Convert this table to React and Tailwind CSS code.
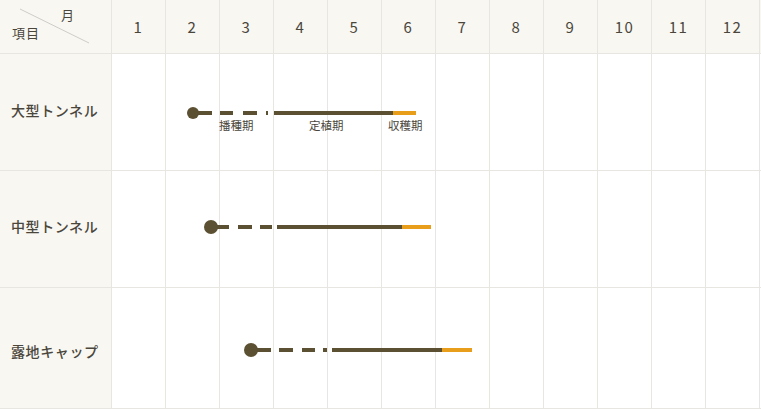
const months = [1, 2, 3, 4, 5, 6, 7, 8, 9, 10, 11, 12];

const BROWN = "#5c5032";
const ORANGE = "#e89e1a";

const rows = [
  {
    label: "大型トンネル",
    h: "h-[117px]",
    pad: "pt-[46px]",
    y: 59,
    circle: 81,
    r: 6,
    segs: [
      [81, 100],
      [108, 121],
      [131, 145],
      [154, 156],
      [162, 281],
    ],
    orange: [281, 304],
    labels: [
      ["播種期", "left-[107px]"],
      ["定植期", "left-[197px]"],
      ["収穫期", "left-[276px]"],
    ],
  },
  {
    label: "中型トンネル",
    h: "h-[117px]",
    pad: "pt-[45px]",
    y: 56,
    circle: 99,
    r: 7,
    segs: [
      [99, 117],
      [126, 140],
      [148, 160],
      [165, 290],
    ],
    orange: [290, 319],
  },
  {
    label: "露地キャップ",
    h: "h-[121px]",
    pad: "pt-[53px]",
    y: 62,
    circle: 139,
    r: 7,
    segs: [
      [139, 159],
      [167, 181],
      [190, 203],
      [211, 215],
      [220, 330],
    ],
    orange: [330, 360],
  },
];

const font = {
  fontFamily: '"Noto Sans CJK JP", "Noto Sans", sans-serif',
};

function Bar({ row }) {
  return (
    <svg
      className="absolute inset-0 pointer-events-none"
      width="648"
      height="121"
      viewBox="0 0 648 121"
    >
      {row.segs.map(([a, b], i) => (
        <rect key={i} x={a} y={row.y - 2} width={b - a} height="4" fill={BROWN} />
      ))}
      <rect
        x={row.orange[0]}
        y={row.y - 2}
        width={row.orange[1] - row.orange[0]}
        height="4"
        fill={ORANGE}
      />
      <circle cx={row.circle} cy={row.y} r={row.r} fill={BROWN} />
    </svg>
  );
}

export default function App() {
  return (
    <div className="w-[761px] h-[409px] bg-white text-[#4a463c]" style={font}>
      {/* header */}
      <div className="flex h-[54px] border-b border-[#e8e6e0] bg-[#f8f7f2]">
        <div className="relative w-[112px] shrink-0 border-r border-[#e8e6e0] flex flex-col justify-between pt-[8px] pb-[14px] pl-[12px] pr-[37px]">
          <svg className="absolute left-0 top-0" width="111" height="53">
            <line x1="20" y1="9" x2="89" y2="43" stroke="#cfcdc6" strokeWidth="1" />
          </svg>
          <span className="self-end text-[13px] leading-none">月</span>
          <span className="self-start text-[13px] leading-none tracking-[1px]">項目</span>
        </div>
        {months.map((m) => (
          <div
            key={m}
            className="w-[54px] shrink-0 border-r border-[#e8e6e0] flex items-center justify-center pt-[2px] text-[15px] tracking-[1.5px]"
          >
            {m}
          </div>
        ))}
      </div>

      {rows.map((row, idx) => (
        <div key={idx} className={`flex ${row.h} border-b border-[#e8e6e0]`}>
          <div
            className={`w-[112px] shrink-0 border-r border-[#e8e6e0] bg-[#f8f7f2] ${row.pad} pl-[11px] text-[14px] leading-[20px] font-medium tracking-[0.6px]`}
          >
            {row.label}
          </div>
          <div className="relative flex">
            {months.map((m) => (
              <div key={m} className="w-[54px] shrink-0 border-r border-[#e8e6e0]" />
            ))}
            <Bar row={row} />
            {row.labels &&
              row.labels.map(([t, l]) => (
                <span key={t} className={`absolute top-[66px] ${l} text-[11.5px] leading-none`}>
                  {t}
                </span>
              ))}
          </div>
        </div>
      ))}
    </div>
  );
}
